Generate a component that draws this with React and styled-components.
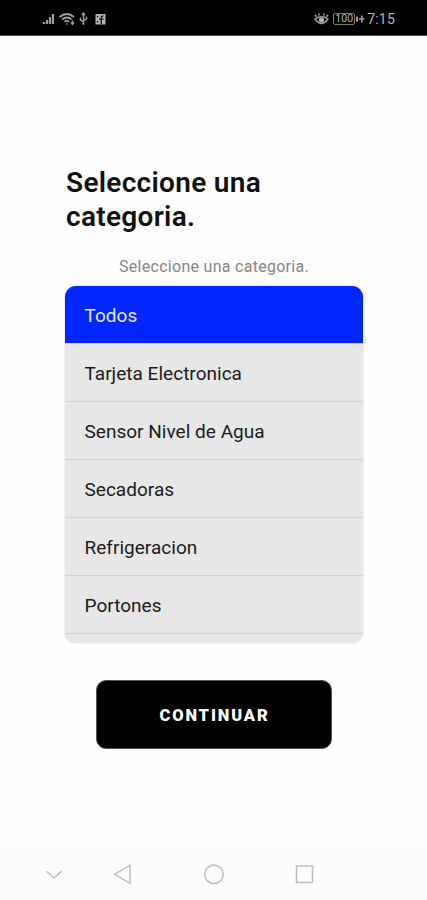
import React, { useState } from 'react';
import styled, { createGlobalStyle } from 'styled-components';

const categories = [
  'Todos',
  'Tarjeta Electronica',
  'Sensor Nivel de Agua',
  'Secadoras',
  'Refrigeracion',
  'Portones',
];

const StatusIcons = () => (
  <StatusSvg width="66" height="14" viewBox="0 0 66 14">
    <path d="M2 12V10M5 12V8M8 12V5M11 12V2" strokeWidth="2.2" />
    <path d="M17.5 5Q25 -1 32 5M20 7.5Q25 3.5 29.5 7.5M22.5 9.8Q25 8 27 9.8" strokeWidth="1.8" />
    <path d="M24.8 11.3v1.5M30.5 8.5v3.5M29 10.5l1.5 2 1.5-2" strokeWidth="1.3" />
    <path d="M41.5 1.5V12.5M38.5 5.5V8L41.5 9.8M44.5 4.5V7L41.5 8.7M40 3L41.5 1.2 43 3M40.5 12h2" strokeWidth="1.4" />
    <rect x="53.5" y="2" width="10" height="10.5" fill="#b4b4b4" stroke="none" />
    <path d="M59.3 12.5V5.5Q59.3 4 61.5 4M57 7.2H61.5M55.5 4v1.5M55.5 9v1.5" stroke="#111" strokeWidth="1.3" />
  </StatusSvg>
);

const EyeIcon = () => (
  <StatusSvg width="15" height="14" viewBox="0 0 15 14">
    <path d="M1 7Q7.5 2.5 14 7Q7.5 16 1 7ZM2.5 4.8L1 2.8M5.2 3.5L4.7 1.5M9.8 3.5L10.3 1.5M12.5 4.8L14 2.8" strokeWidth="1.5" />
    <circle cx="7.5" cy="8" r="2.6" fill="#b4b4b4" stroke="none" />
  </StatusSvg>
);

const App = () => {
  const [selected, setSelected] = useState('Todos');

  return (
    <>
      <GlobalStyle />
      <Screen>
        <StatusBar>
          <StatusIcons />
          <StatusRight>
            <EyeIcon />
            <Battery>100</Battery>
            <Charging width="9" height="12" viewBox="0 0 9 12">
              <path d="M1 3.5v5" strokeWidth="2" />
              <path d="M5.8 2.5v7M3 6h5.6" strokeWidth="1.5" />
            </Charging>
            <Clock>7:15</Clock>
          </StatusRight>
        </StatusBar>

        <Content>
          <Title>Seleccione una categoria.</Title>
          <Subtitle>Seleccione una categoria.</Subtitle>

          <CategoryList>
            {categories.map((category) => (
              <CategoryRow
                key={category}
                $active={category === selected}
                onClick={() => setSelected(category)}
              >
                {category}
              </CategoryRow>
            ))}
          </CategoryList>

          <ContinueButton>CONTINUAR</ContinueButton>
        </Content>

        <NavBar>
          <NavIcon viewBox="0 0 24 24">
            <path d="M4.5 9.3L12 16L19.5 9.3" />
          </NavIcon>
          <NavIcon viewBox="0 0 24 24">
            <path d="M19 3.2V21.3L3.6 12.3Z" />
          </NavIcon>
          <NavIcon viewBox="0 0 24 24">
            <circle cx="12" cy="12.3" r="9.3" />
          </NavIcon>
          <NavIcon viewBox="0 0 24 24">
            <rect x="3.5" y="4" width="16" height="16.5" />
          </NavIcon>
        </NavBar>
      </Screen>
    </>
  );
};

export default App;

// style
const GlobalStyle = createGlobalStyle`
  * {
    box-sizing: border-box;
  }

  body {
    margin: 0;
    background: #fff;
    font-family: Roboto, 'Liberation Sans', sans-serif;
  }
`;

const Screen = styled.div`
  display: flex;
  flex-direction: column;
  height: 900px;
  overflow: hidden;
  background: #fefefe;
`;

const StatusBar = styled.header`
  display: flex;
  flex: none;
  justify-content: space-between;
  align-items: center;
  height: 36px;
  padding: 2px 32px 0 42px;
  background: #000;
  border-bottom: 1px solid #555;
  color: #b4b4b4;
`;

const StatusSvg = styled.svg`
  display: block;
  fill: none;
  stroke: #a0a0a0;
`;

const StatusRight = styled.div`
  display: flex;
  align-items: center;
`;

const Battery = styled.span`
  width: 22px;
  height: 12px;
  margin-left: 4px;
  border: 1px solid #7c7c7c;
  border-radius: 2px;
  font-size: 10.5px;
  line-height: 10px;
  text-align: center;
`;

const Charging = styled(StatusSvg)`
  margin-left: 1px;
`;

const Clock = styled.span`
  margin-left: 2px;
  font-size: 14px;
  line-height: 16px;
  letter-spacing: 0.2px;
`;

const Content = styled.main`
  display: flex;
  flex: 1;
  flex-direction: column;
  align-items: center;
  padding: 130px 65px 0;
`;

const Title = styled.h1`
  width: 100%;
  margin: 0;
  padding-left: 1px;
  color: #111;
  font-size: 28px;
  font-weight: 600;
  line-height: 34px;
  letter-spacing: 0.3px;
`;

const Subtitle = styled.p`
  margin: 23px 0 9px;
  padding-left: 1px;
  color: #858585;
  font-size: 16px;
  line-height: 20px;
  letter-spacing: 0.28px;
`;

const CategoryList = styled.div`
  width: 298px;
  height: 357px;
  overflow: hidden;
  background: #e7e7e7;
  border-radius: 11px;
  box-shadow: 0 0 2px rgba(0, 0, 0, 0.18);
`;

const CategoryRow = styled.div`
  display: flex;
  align-items: center;
  height: 58px;
  padding: 1px 0 0 20px;
  background: ${({ $active }) => ($active ? '#0026ff' : '#e7e7e7')};
  border-bottom: 1px solid ${({ $active }) => ($active ? '#c8ccf5' : '#d2d2d2')};
  color: ${({ $active }) => ($active ? '#e8e8ff' : '#1b1b1b')};
  font-size: 19px;
  letter-spacing: 0.02px;
  cursor: pointer;
`;

const ContinueButton = styled.button`
  width: 236px;
  height: 69px;
  margin-top: 37px;
  padding: 2px 0 0 2px;
  background: #000;
  border: 1px solid #555;
  border-radius: 10px;
  color: #fff;
  font-family: inherit;
  font-size: 16.5px;
  font-weight: 900;
  letter-spacing: 1.85px;
  cursor: pointer;
`;

const NavBar = styled.nav`
  display: flex;
  flex: none;
  align-items: center;
  height: 52px;
  padding-left: 42px;
  background: #fcfcfc;
`;

const NavIcon = styled.svg`
  width: 24px;
  height: 24px;
  fill: none;
  stroke: #bdbdbd;
  stroke-width: 1.5;

  &:nth-child(2) {
    margin-left: 45px;
  }

  &:nth-child(n + 3) {
    margin-left: 67px;
  }
`;
